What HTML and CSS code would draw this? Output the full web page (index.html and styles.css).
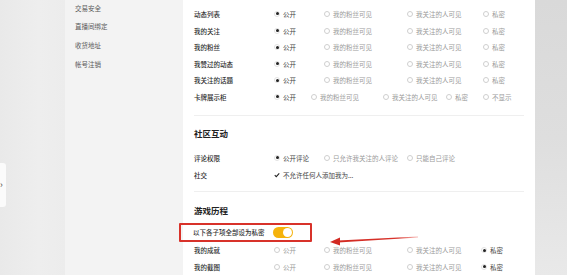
FILE: index.html
```html
<!DOCTYPE html>
<html lang="zh-CN">
<head>
<meta charset="utf-8">
<title>隐私设置</title>
<link rel="stylesheet" href="styles.css">
</head>
<body>
<div class="page">
  <div class="gutter">
    <div class="tab">›</div>
  </div>
  <aside class="sidebar">
    <ul class="menu">
      <li>交易安全</li>
      <li>直播间绑定</li>
      <li>收货地址</li>
      <li>帐号注销</li>
    </ul>
  </aside>
  <main class="content">
    <div class="row">
      <span class="label">动态列表</span>
      <span class="opt w1 on"><i class="radio"></i>公开</span>
      <span class="opt w2"><i class="radio"></i>我的粉丝可见</span>
      <span class="opt w3"><i class="radio"></i>我关注的人可见</span>
      <span class="opt"><i class="radio"></i>私密</span>
    </div>
    <div class="row">
      <span class="label">我的关注</span>
      <span class="opt w1 on"><i class="radio"></i>公开</span>
      <span class="opt w2"><i class="radio"></i>我的粉丝可见</span>
      <span class="opt w3"><i class="radio"></i>我关注的人可见</span>
      <span class="opt"><i class="radio"></i>私密</span>
    </div>
    <div class="row">
      <span class="label">我的粉丝</span>
      <span class="opt w1 on"><i class="radio"></i>公开</span>
      <span class="opt w2"><i class="radio"></i>我的粉丝可见</span>
      <span class="opt w3"><i class="radio"></i>我关注的人可见</span>
      <span class="opt"><i class="radio"></i>私密</span>
    </div>
    <div class="row">
      <span class="label">我赞过的动态</span>
      <span class="opt w1 on"><i class="radio"></i>公开</span>
      <span class="opt w2"><i class="radio"></i>我的粉丝可见</span>
      <span class="opt w3"><i class="radio"></i>我关注的人可见</span>
      <span class="opt"><i class="radio"></i>私密</span>
    </div>
    <div class="row">
      <span class="label">我关注的话题</span>
      <span class="opt w1 on"><i class="radio"></i>公开</span>
      <span class="opt w2"><i class="radio"></i>我的粉丝可见</span>
      <span class="opt w3"><i class="radio"></i>我关注的人可见</span>
      <span class="opt"><i class="radio"></i>私密</span>
    </div>
    <div class="row">
      <span class="label">卡牌展示柜</span>
      <span class="opt c1 on"><i class="radio"></i>公开</span>
      <span class="opt c2"><i class="radio"></i>我的粉丝可见</span>
      <span class="opt c3"><i class="radio"></i>我关注的人可见</span>
      <span class="opt c4"><i class="radio"></i>私密</span>
      <span class="opt"><i class="radio"></i>不显示</span>
    </div>

    <hr class="divider first">

    <h2 class="section">社区互动</h2>
    <div class="row">
      <span class="label">评论权限</span>
      <span class="opt w1 on"><i class="radio"></i>公开评论</span>
      <span class="opt w2"><i class="radio"></i>只允许我关注的人评论</span>
      <span class="opt"><i class="radio"></i>只能自己评论</span>
    </div>
    <div class="row">
      <span class="label">社交</span>
      <span class="opt on"><svg class="check" viewBox="0 0 8 8"><path d="M1 4.2 L3 6.2 L7 1.8" fill="none" stroke="#222" stroke-width="1.4"/></svg>不允许任何人添加我为...</span>
    </div>

    <hr class="divider second">

    <h2 class="section game">游戏历程</h2>
    <div class="master">
      <span class="master-text">以下各子项全部设为私密</span>
      <span class="toggle"><i class="knob"></i></span>
    </div>
    <div class="row">
      <span class="label">我的成就</span>
      <span class="opt w1"><i class="radio"></i>公开</span>
      <span class="opt w2"><i class="radio"></i>我的粉丝可见</span>
      <span class="opt w3b"><i class="radio"></i>我关注的人可见</span>
      <span class="opt on"><i class="radio"></i>私密</span>
    </div>
    <div class="row">
      <span class="label">我的截图</span>
      <span class="opt w1"><i class="radio"></i>公开</span>
      <span class="opt w2"><i class="radio"></i>我的粉丝可见</span>
      <span class="opt w3b"><i class="radio"></i>我关注的人可见</span>
      <span class="opt on"><i class="radio"></i>私密</span>
    </div>

    <svg class="arrow" viewBox="0 0 90 12" aria-hidden="true">
      <defs>
        <linearGradient id="fade" x1="0" x2="1" y1="0" y2="0">
          <stop offset="0" stop-color="#d22a22"/>
          <stop offset="0.75" stop-color="#d8342c"/>
          <stop offset="1" stop-color="#e85a52" stop-opacity="0.4"/>
        </linearGradient>
      </defs>
      <path d="M8 6.6 L88 2.4 L88 3.6 L8 8.4 Z" fill="url(#fade)"/>
      <path d="M0 8 L10 3.6 L10 11.6 Z" fill="#d22a22"/>
    </svg>
  </main>
  <div class="right"></div>
</div>
</body>
</html>
```

FILE: styles.css
```css
* { box-sizing: border-box; }
html, body {
  margin: 0;
  padding: 0;
  width: 567px;
  height: 275px;
  overflow: hidden;
  font-family: "Noto Sans CJK SC", "Noto Sans", sans-serif;
}
.page {
  display: flex;
  width: 567px;
  height: 275px;
}
.gutter {
  width: 65px;
  flex: none;
  background: linear-gradient(90deg, #e9e9e9 0%, #eeeeee 60%, #ececec 100%);
  display: flex;
  align-items: center;
  padding-top: 95px;
}
.tab {
  width: 6px;
  height: 44px;
  background: #fbfbfb;
  border-radius: 0 3px 3px 0;
  font-size: 9px;
  line-height: 44px;
  color: #444;
  overflow: hidden;
}
.sidebar {
  width: 118px;
  flex: none;
  background: #f3f3f3;
  padding-left: 10px;
}
.menu {
  list-style: none;
  margin: -1.4px 0 0;
  padding: 0;
}
.menu li {
  font-size: 6.5px;
  line-height: 18.8px;
  height: 18.8px;
  color: #5a5a5a;
}
.content {
  position: relative;
  width: 352px;
  flex: none;
  background: #fff;
  padding: 5.7px 11px 0 11px;
}
.right {
  flex: 1;
  background: linear-gradient(180deg, #d9d9d9 0%, #dedede 50%, #e9e9e9 100%);
}
.row {
  display: flex;
  align-items: center;
  height: 16.6px;
  font-size: 6.5px;
  white-space: nowrap;
}
.label {
  width: 80px;
  flex: none;
  color: #2e2e2e;
  font-weight: 500;
}
.opt {
  display: flex;
  align-items: center;
  flex: none;
  color: #9a9a9a;
}
.opt.on { color: #444; }
.w1 { width: 50px; }
.w2 { width: 83px; }
.w3 { width: 76px; }
.w3b { width: 74px; }
.c1 { width: 37px; }
.c2 { width: 72px; }
.c3 { width: 63px; }
.c4 { width: 37px; }
.radio {
  width: 6px;
  height: 6px;
  border-radius: 50%;
  border: 0.8px solid #cfcfcf;
  margin-right: 3px;
  flex: none;
  position: relative;
}
.on > .radio { border-color: #e2e2e2; }
.on > .radio::after {
  content: "";
  position: absolute;
  left: 50%;
  top: 50%;
  width: 3px;
  height: 3px;
  margin: -1.5px 0 0 -1.5px;
  border-radius: 50%;
  background: #222;
}
.check {
  width: 6px;
  height: 6px;
  margin-right: 3px;
  flex: none;
}
.divider {
  border: 0;
  height: 1px;
  background: #efefef;
  width: 330px;
  margin: 0;
}
.divider.first { margin-top: 9.7px; }
.divider.second { margin-top: 8px; }
.section {
  margin: 10px 0 0;
  font-size: 8.5px;
  line-height: 14px;
  height: 14px;
  font-weight: 600;
  color: #222;
}
.section + .row { margin-top: 9.7px; }
.section.game { margin-top: 11px; }
.master {
  display: flex;
  align-items: center;
  width: 133px;
  height: 19px;
  margin: 6px 0 0 -15px;
  padding: 0 17px 0 12px;
  border: 2px solid #d8322a;
  border-radius: 1px;
  font-size: 6.5px;
  color: #333;
  font-weight: 500;
  white-space: nowrap;
}
.master-text { flex: 1; }
.toggle {
  width: 20px;
  height: 11px;
  border-radius: 6px;
  background: #f5b30c;
  position: relative;
  flex: none;
}
.knob {
  position: absolute;
  right: 1px;
  top: 1px;
  width: 9px;
  height: 9px;
  border-radius: 50%;
  background: #fff;
}
.arrow {
  position: absolute;
  left: 147px;
  top: 234px;
  width: 90px;
  height: 12px;
}
```
